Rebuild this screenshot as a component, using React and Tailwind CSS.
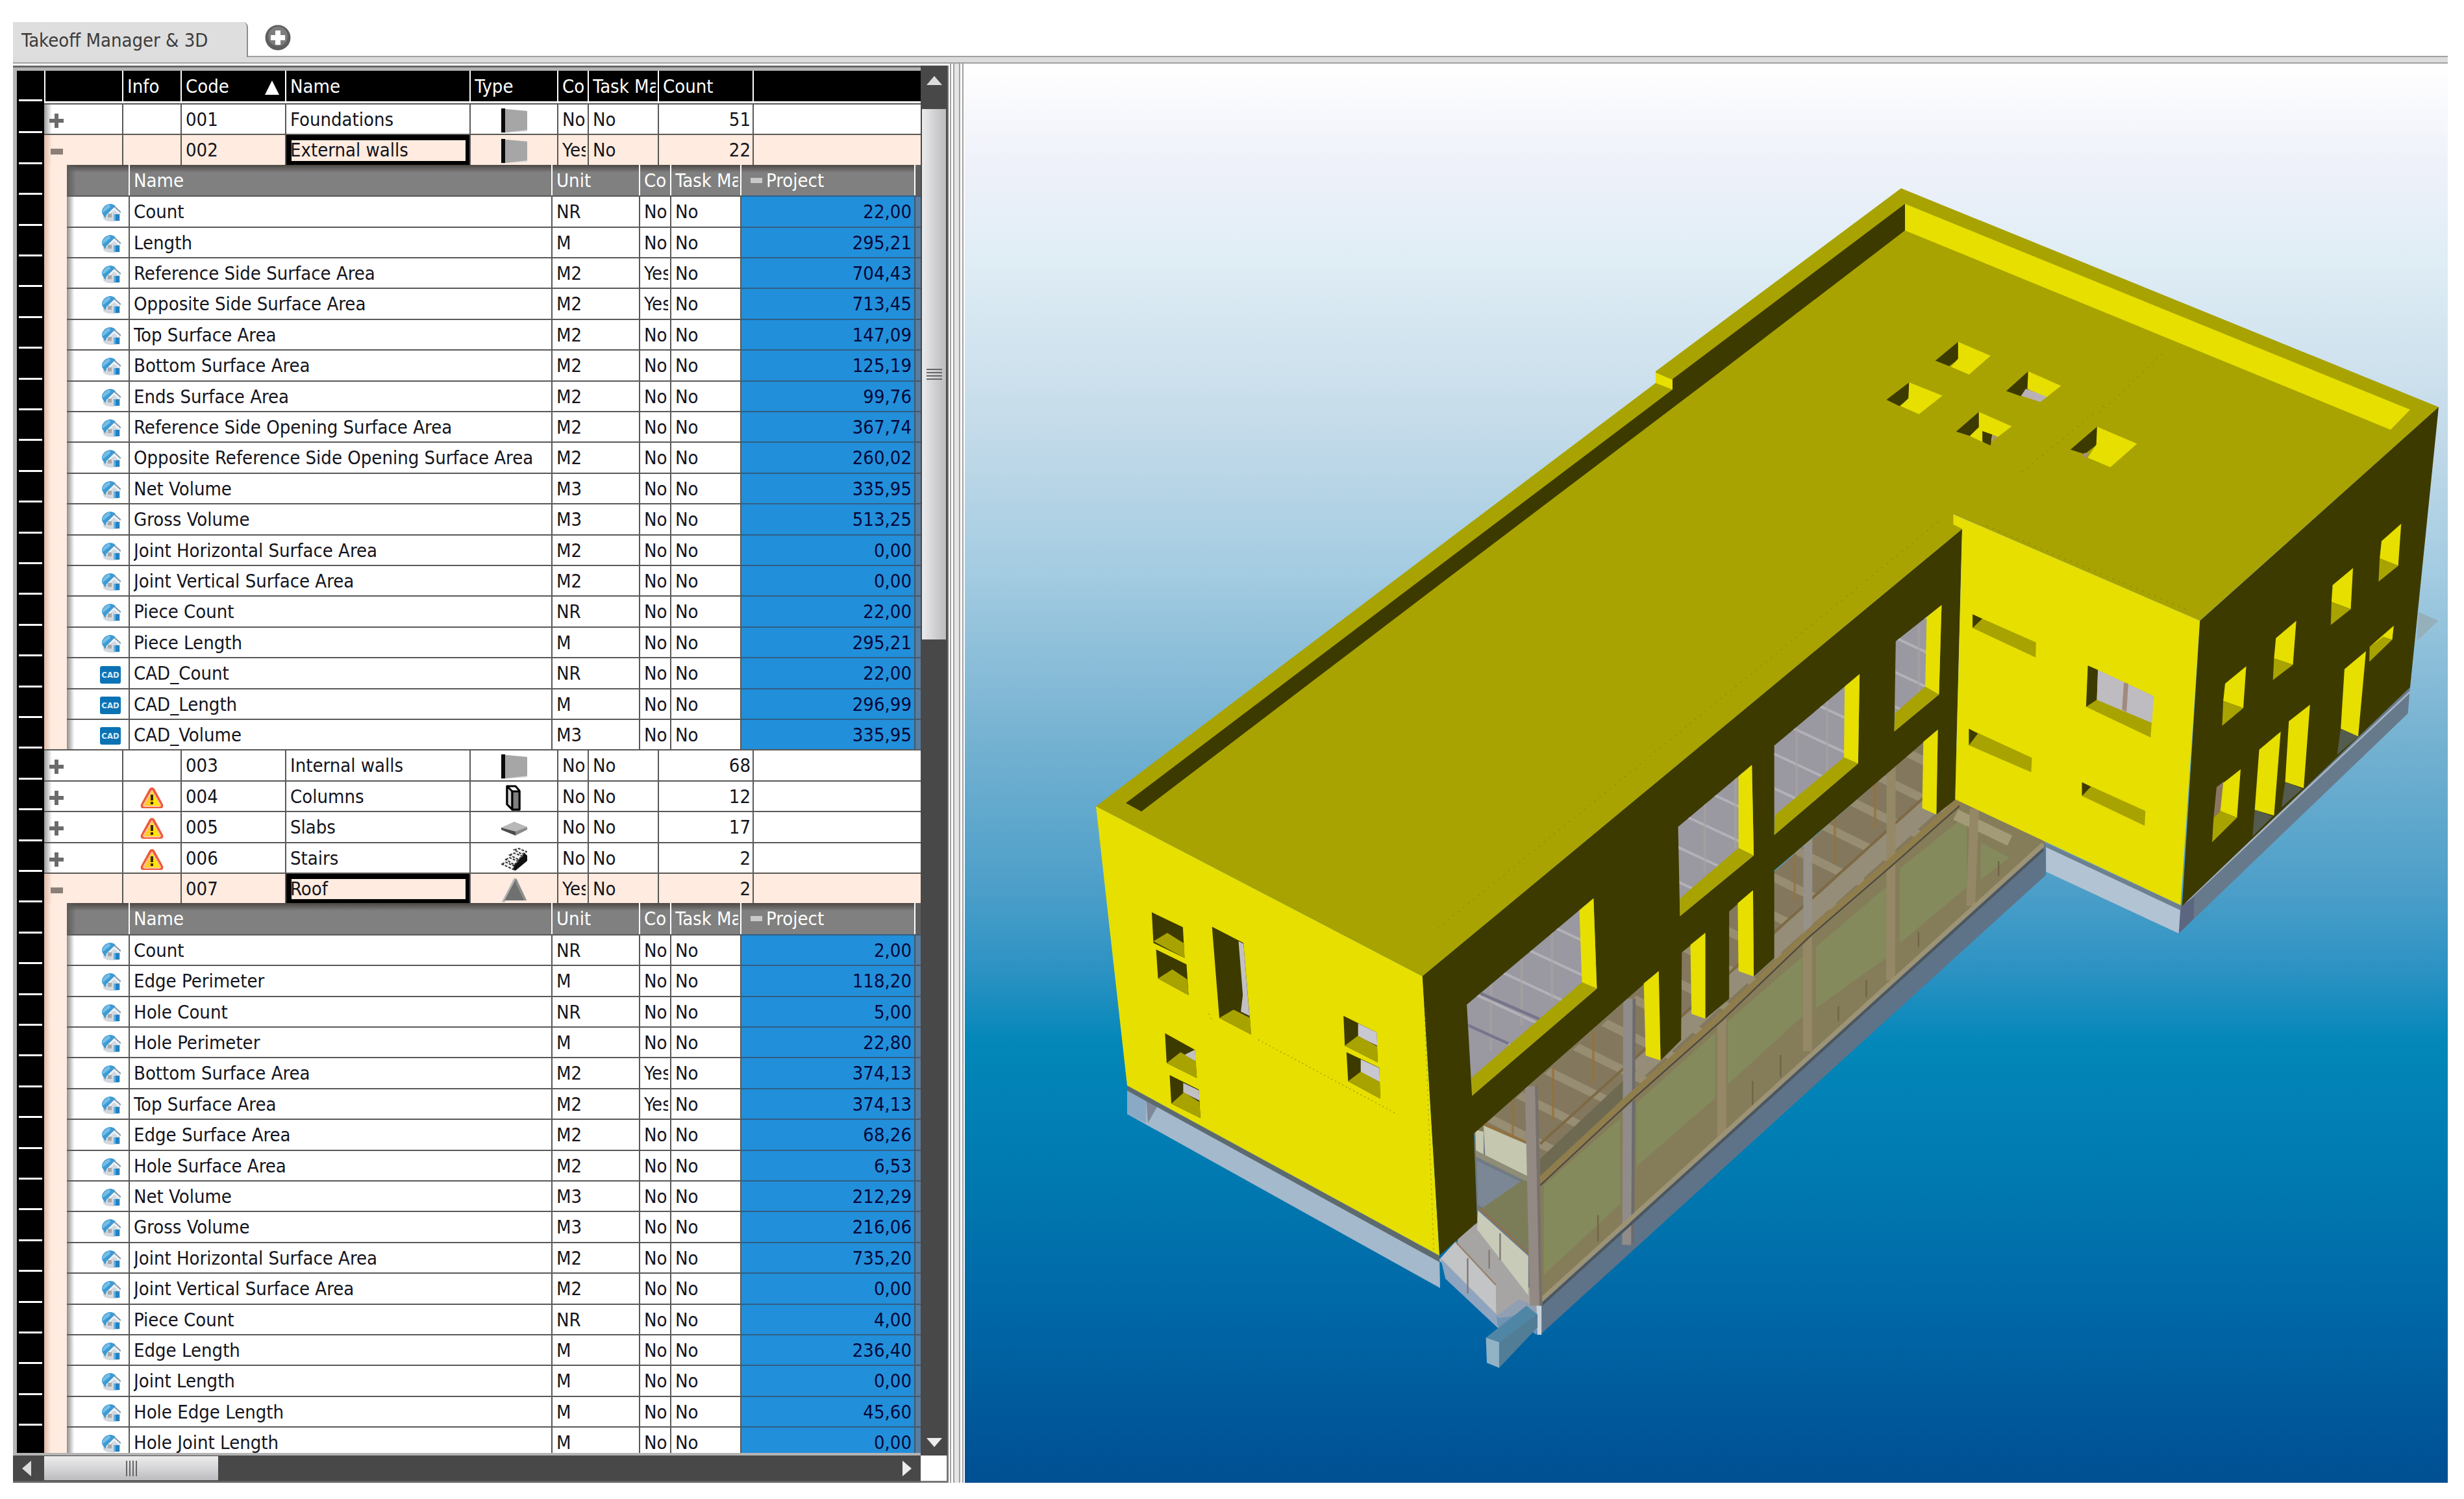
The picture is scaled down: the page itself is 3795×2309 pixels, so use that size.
import React from "react";
import clsx from "clsx";

const groups = [
  { code: "001", name: "Foundations", type: "wall", co: "No", count: 51 },
  {
    code: "002",
    name: "External walls",
    type: "wall",
    co: "Yes",
    count: 22,
    open: true,
    items: [
      ["Count", "NR", "No", "22,00"],
      ["Length", "M", "No", "295,21"],
      ["Reference Side Surface Area", "M2", "Yes", "704,43"],
      ["Opposite Side Surface Area", "M2", "Yes", "713,45"],
      ["Top Surface Area", "M2", "No", "147,09"],
      ["Bottom Surface Area", "M2", "No", "125,19"],
      ["Ends Surface Area", "M2", "No", "99,76"],
      ["Reference Side Opening Surface Area", "M2", "No", "367,74"],
      ["Opposite Reference Side Opening Surface Area", "M2", "No", "260,02"],
      ["Net Volume", "M3", "No", "335,95"],
      ["Gross Volume", "M3", "No", "513,25"],
      ["Joint Horizontal Surface Area", "M2", "No", "0,00"],
      ["Joint Vertical Surface Area", "M2", "No", "0,00"],
      ["Piece Count", "NR", "No", "22,00"],
      ["Piece Length", "M", "No", "295,21"],
      ["CAD_Count", "NR", "No", "22,00"],
      ["CAD_Length", "M", "No", "296,99"],
      ["CAD_Volume", "M3", "No", "335,95"],
    ],
  },
  { code: "003", name: "Internal walls", type: "wall", co: "No", count: 68 },
  { code: "004", name: "Columns", type: "column", co: "No", count: 12, warn: true },
  { code: "005", name: "Slabs", type: "slab", co: "No", count: 17, warn: true },
  { code: "006", name: "Stairs", type: "stairs", co: "No", count: 2, warn: true },
  {
    code: "007",
    name: "Roof",
    type: "roof",
    co: "Yes",
    count: 2,
    open: true,
    items: [
      ["Count", "NR", "No", "2,00"],
      ["Edge Perimeter", "M", "No", "118,20"],
      ["Hole Count", "NR", "No", "5,00"],
      ["Hole Perimeter", "M", "No", "22,80"],
      ["Bottom Surface Area", "M2", "Yes", "374,13"],
      ["Top Surface Area", "M2", "Yes", "374,13"],
      ["Edge Surface Area", "M2", "No", "68,26"],
      ["Hole Surface Area", "M2", "No", "6,53"],
      ["Net Volume", "M3", "No", "212,29"],
      ["Gross Volume", "M3", "No", "216,06"],
      ["Joint Horizontal Surface Area", "M2", "No", "735,20"],
      ["Joint Vertical Surface Area", "M2", "No", "0,00"],
      ["Piece Count", "NR", "No", "4,00"],
      ["Edge Length", "M", "No", "236,40"],
      ["Joint Length", "M", "No", "0,00"],
      ["Hole Edge Length", "M", "No", "45,60"],
      ["Hole Joint Length", "M", "No", "0,00"],
    ],
  },
];

// every line of the grid gets a running number, open groups take 1 + header + items
let line = 0;
const rows = groups.map((group) => {
  const start = line;
  line += group.open ? group.items.length + 2 : 1;
  return { ...group, start };
});
const totalLines = line;

const rowHeight = (i) => (i % 5 === 1 || i % 5 === 3 ? "h-12" : "h-[47px]");

const TypeIcon = ({ type }) => (
  <svg viewBox="0 0 40 40" className="mx-auto h-10 w-10">
    {type === "wall" && (
      <>
        <path d="M0 1 40 5V36L0 39Z" fill="#d4d4d4" />
        <path d="M5 2 40 5V34L5 38Z" fill="#a6a6a6" />
        <path d="M0 1H6V38H0Z" fill="#0a0a0a" />
      </>
    )}
    {type === "column" && (
      <g stroke="#000" strokeWidth="3" strokeLinejoin="round">
        <path d="M9 2H22L28 9V38H17L9 30Z" fill="#fff" />
        <path d="M9 2 17 10V38L9 30Z" fill="#d0d0d0" />
        <path d="M17 10H28V38H17Z" fill="#808080" />
      </g>
    )}
    {type === "slab" && (
      <>
        <path d="M0 19 20 10 40 18V22L22 31 0 22Z" fill="#8a8a8a" />
        <path d="M0 19 20 10 40 18 22 25Z" fill="#b8b8b8" />
        <path d="M0 19 22 25V31L0 22Z" fill="#4c4c4c" />
      </>
    )}
    {type === "stairs" && (
      <>
        <path d="M36 10 40 14V22L22 37 18 36V30Z" fill="#111" />
        <g fill="#f2f2f2" stroke="#333" strokeWidth="2" strokeDasharray="4 2">
          <path d="M20 5 27 3 39 8 32 12Z" />
          <path d="M13 13 20 10 33 15 26 20Z" />
          <path d="M7 20 13 17 26 23 20 28Z" />
          <path d="M1 27 7 24 20 30 18 35Z" />
        </g>
      </>
    )}
    {type === "roof" && (
      <>
        <path d="M20 1 1 38 5 39 23 4Z" fill="#b4b4b4" />
        <path d="M23 2 39 36H5Z" fill="#707070" />
        <path d="M23 2 39 36 35 36 22 8Z" fill="#8f8f8f" />
      </>
    )}
  </svg>
);

const WarningIcon = () => (
  <svg viewBox="0 0 36 34" className="mx-auto h-[34px] w-9">
    <path
      d="M18 1C21 1 22 3 23 5L35 27C36 31 35 33 31 33H5C1 33 0 31 1 27L13 5C14 3 15 1 18 1Z"
      fill="#f0593c"
    />
    <path d="M18 4 32 28C32 30 31 31 29 31H7C5 31 4 30 4 28Z" fill="#fbc9a0" />
    <path d="M18 7 30 29H6Z" fill="#ffcc1f" />
    <path d="M18 7 30 29H18Z" fill="#ffe600" />
    <path d="M16 12H20V21H16ZM16 23H20V27H16Z" fill="#3b2a00" />
  </svg>
);

const HouseIcon = () => (
  <svg viewBox="0 0 30 28" className="h-7 w-[30px]">
    <path d="M3 12V23C8 28 16 28 29 26V12L20 4Z" fill="#d3d8de" />
    <path d="M1 14C0 8 5 1 13 0 17 0 20 1 22 4L8 17 6 22Z" fill="#3d9ad3" />
    <path d="M1 14C2 7 7 2 13 1L14 5 4 13Z" fill="#74bde6" />
    <path d="M8 17 20 5 29 13 27 16 20 9 10 18Z" fill="#eef4f9" />
    <path d="M20 4 30 13" stroke="#7f95a8" strokeWidth="2" />
    <path d="M10 15H16V21H10Z" fill="#a8a8a8" />
    <path d="M19 16H28V26H19Z" fill="#2381c3" />
    <path d="M19 16H22V26H19Z" fill="#62b2e2" />
  </svg>
);

const CadIcon = () => (
  <span className="flex h-[27px] w-8 items-center justify-center rounded-[3px] bg-[#0b72b5] text-[13px] font-bold leading-none text-[#d5ecfa]">
    CAD
  </span>
);

const Toggle = ({ open }) => (
  <button
    aria-label={open ? "Collapse" : "Expand"}
    className="ml-2 mt-1 block h-[22px] w-[22px]"
  >
    <svg viewBox="0 0 22 22" className="h-full w-full" fill="#6b6b6b">
      {open ? (
        <path d="M2 7H21V16H2Z" fill="#8b7f78" />
      ) : (
        <path d="M8 0H14V8H22V14H14V22H8V14H0V8H8Z" />
      )}
    </svg>
  </button>
);

const Cell = ({ children, className }) => (
  <td
    className={clsx(
      "border-l-2 border-t-2 border-[#5a5857] py-0 pl-[6px] pr-[3px]",
      className
    )}
  >
    <span className="block overflow-hidden whitespace-nowrap">{children}</span>
  </td>
);

const HeadCell = ({ children }) => (
  <th className="border-l-2 border-white py-0 pl-[6px] pr-[3px] text-left font-normal">
    <span className="block overflow-hidden whitespace-nowrap">{children}</span>
  </th>
);

const Details = ({ items, start }) => (
  <div className="flex">
    <div className="w-[35px] shrink-0 bg-linear-to-r from-[#dcb9a5] via-[#ffebdf] via-30% to-[#ffebdf]" />
    <table className="w-full table-fixed border-separate border-spacing-0">
      <colgroup>
        <col className="w-[95px]" />
        <col className="w-[651px]" />
        <col className="w-[135px]" />
        <col className="w-12" />
        <col className="w-[108px]" />
        <col className="w-[268px]" />
        <col />
      </colgroup>
      <thead>
        <tr
          className={clsx(
            "bg-linear-to-b from-[#4c4744] via-[#808080] via-25% to-[#808080] text-white",
            rowHeight(start)
          )}
        >
          <th className="bg-linear-to-r from-[#5c5c5c] to-transparent to-15%" />
          <HeadCell>Name</HeadCell>
          <HeadCell>Unit</HeadCell>
          <HeadCell>Co</HeadCell>
          <HeadCell>Task Ma</HeadCell>
          <HeadCell>
            <span className="flex items-center gap-[6px] pl-2">
              <span className="h-2 w-[18px] bg-[#c9c9c9]" />
              Project
            </span>
          </HeadCell>
          <th className="border-l-2 border-white bg-[#5f5f5f]" />
        </tr>
      </thead>
      <tbody>
        {items.map(([name, unit, co, value], i) => (
          <tr key={name} className={clsx("bg-white", rowHeight(start + 1 + i))}>
            <td className="border-t-2 border-[#5a5857] bg-linear-to-r from-[#8e8e8e] to-white to-12% py-0 pr-3">
              <span className="mt-1 flex justify-end">
                {name.startsWith("CAD") ? <CadIcon /> : <HouseIcon />}
              </span>
            </td>
            <Cell>{name}</Cell>
            <Cell>{unit}</Cell>
            <Cell>{co}</Cell>
            <Cell>No</Cell>
            <td className="border-l-2 border-t-2 border-l-[#5a5857] border-t-[#2f5f85] bg-[#228fda] py-0 pr-1 text-right text-[#04083a]">
              {value}
            </td>
            <td className="border-l-2 border-t-2 border-[#44586b] bg-[#5a7c9e]" />
          </tr>
        ))}
      </tbody>
    </table>
  </div>
);

const TakeoffTable = () => (
  <table className="w-full table-fixed border-separate border-spacing-0">
    <colgroup>
      <col className="w-[120px]" />
      <col className="w-[90px]" />
      <col className="w-[161px]" />
      <col className="w-[284px]" />
      <col className="w-[135px]" />
      <col className="w-[47px]" />
      <col className="w-[108px]" />
      <col className="w-[146px]" />
      <col />
    </colgroup>
    <thead>
      <tr className="h-[47px] bg-black text-white">
        <th className="border-l-2 border-white" />
        <HeadCell>Info</HeadCell>
        <HeadCell>
          <span className="flex items-center justify-between pr-[6px]">
            Code
            <svg viewBox="0 0 22 22" className="mt-1 h-[22px] w-[22px]">
              <path d="M11 0 22 22H0Z" fill="#fff" />
            </svg>
          </span>
        </HeadCell>
        <HeadCell>Name</HeadCell>
        <HeadCell>Type</HeadCell>
        <HeadCell>Co</HeadCell>
        <HeadCell>Task Ma</HeadCell>
        <HeadCell>Count</HeadCell>
        <th className="border-l-2 border-white" />
      </tr>
      <tr className="h-[3px]">
        <th colSpan={9} className="bg-white p-0" />
      </tr>
    </thead>
    <tbody>
      {rows.map((row) => (
        <React.Fragment key={row.code}>
          <tr
            className={clsx(
              rowHeight(row.start),
              row.open ? "bg-[#ffebdf]" : "bg-white"
            )}
          >
            <td
              className={clsx(
                "border-t-2 border-[#5a5857] bg-linear-to-r to-transparent to-10% p-0",
                row.open ? "from-[#dcb9a5]" : "from-[#9a9a9a]"
              )}
            >
              <Toggle open={row.open} />
            </td>
            <td className="border-l-2 border-t-2 border-[#5a5857] p-0 pt-1">
              {row.warn && <WarningIcon />}
            </td>
            <Cell>{row.code}</Cell>
            <Cell
              className={
                row.open &&
                "shadow-[inset_8px_8px_0_#000,inset_-6px_-6px_0_#000]"
              }
            >
              {row.name}
            </Cell>
            <td className="border-l-2 border-t-2 border-[#5a5857] p-0 pt-1">
              <TypeIcon type={row.type} />
            </td>
            <Cell>{row.co}</Cell>
            <Cell>No</Cell>
            <Cell className="text-right">{row.count}</Cell>
            <td className="border-l-2 border-t-2 border-[#5a5857]" />
          </tr>
          {row.open && (
            <tr>
              <td colSpan={9} className="p-0">
                <Details items={row.items} start={row.start + 1} />
              </td>
            </tr>
          )}
        </React.Fragment>
      ))}
    </tbody>
  </table>
);

const RowGutter = () => (
  <div className="w-[42px] shrink-0 bg-black px-[3px]">
    <div className="mb-[2px] h-[47px] border-b-[3px] border-white" />
    {Array.from({ length: totalLines }, (_, i) => (
      <div
        key={i}
        className={clsx("border-b-[3px] border-white", rowHeight(i))}
      />
    ))}
  </div>
);

const VerticalScrollbar = () => (
  <div className="flex w-[43px] shrink-0 flex-col border-r-2 border-[#6f6f6f] bg-[#484848] pt-[2px]">
    <button aria-label="Scroll up" className="h-[65px] w-full">
      <svg viewBox="0 0 24 14" className="mx-auto mb-6 h-[14px] w-6">
        <path d="M12 0 24 14H0Z" fill="#dcdcdc" />
      </svg>
    </button>
    <div className="mx-[2px] flex h-[817px] flex-col items-center justify-center gap-[3px] bg-linear-to-r from-[#ececec] via-[#d2d2d4] to-[#bcbcc0]">
      {[0, 1, 2, 3].map((i) => (
        <span key={i} className="h-[2px] w-6 bg-[#666]" />
      ))}
    </div>
    <button aria-label="Scroll down" className="mt-auto h-10 w-full">
      <svg viewBox="0 0 24 14" className="mx-auto h-[14px] w-6">
        <path d="M12 14 24 0H0Z" fill="#ececec" />
      </svg>
    </button>
  </div>
);

const HorizontalScrollbar = () => (
  <div className="flex h-[42px] shrink-0">
    <div className="flex flex-1 items-center border-b-[3px] border-[#666] bg-[#484848]">
      <button aria-label="Scroll left" className="w-12">
        <svg viewBox="0 0 14 24" className="ml-[14px] h-6 w-[14px]">
          <path d="M0 12 14 0V24Z" fill="#dcdcdc" />
        </svg>
      </button>
      <div className="flex h-[37px] w-[268px] items-center justify-center gap-[3px] bg-linear-to-b from-[#ececec] via-[#d6d6d8] to-[#bcbcc0]">
        {[0, 1, 2, 3].map((i) => (
          <span key={i} className="h-6 w-[2px] bg-[#666]" />
        ))}
      </div>
      <button aria-label="Scroll right" className="ml-auto w-7">
        <svg viewBox="0 0 14 24" className="h-6 w-[14px]">
          <path d="M14 12 0 0V24Z" fill="#ececec" />
        </svg>
      </button>
    </div>
    <div className="w-[43px] border-b-[3px] border-r-[3px] border-[#777] bg-white" />
  </div>
);

const TOP = "#a8a300";
const LIT = "#e6df00";
const DARK = "#3d3a00";

const P = ({ p, f, o }) => <polygon points={p} fill={f} opacity={o} />;

const Model = () => (
  <svg
    viewBox="1486 98 2284 2186"
    preserveAspectRatio="none"
    className="h-full w-full"
    role="img"
    aria-label="3D model"
  >
    <defs>
      <linearGradient id="sky" x1="0" y1="0" x2="0" y2="1">
        <stop offset="0" stopColor="#ffffff" />
        <stop offset="0.07" stopColor="#eff1fa" />
        <stop offset="0.14" stopColor="#dfedf5" />
        <stop offset="0.25" stopColor="#c6dcea" />
        <stop offset="0.36" stopColor="#a3cbe1" />
        <stop offset="0.48" stopColor="#74b1d1" />
        <stop offset="0.58" stopColor="#4d9fc9" />
        <stop offset="0.64" stopColor="#2b92c3" />
        <stop offset="0.69" stopColor="#0387b9" />
        <stop offset="0.78" stopColor="#007ab1" />
        <stop offset="0.88" stopColor="#0067a6" />
        <stop offset="1" stopColor="#004f93" />
      </linearGradient>
      <clipPath id="floor">
        <polygon points="2270,1746 2513,1540 2960,1100 3011,1232 2513,1688 2372,1820 2290,1790" />
      </clipPath>
      <clipPath id="glass">
        <polygon points="103,1215 443,930 412,1155 117,1410" />
        <polygon points="670,738 868,572 832,795 675,930" />
        <polygon points="928,520 1157,328 1115,552 930,706" />
        <polygon points="1254,240 1377,143 1333,362 1252,433" />
      </clipPath>
    </defs>
    <rect x="1486" y="98" width="2284" height="2186" fill="url(#sky)" />

    {/* glazed terrace under the long facade */}
    <P p="2372,2005 3151,1299 3151,1348 2372,2056" f="#5f7388" />
    <P p="2270,1700 3011,1150 3151,1299 2372,2008 2275,1883" f="#857c5a" />
    <P p="2270,1746 3011,1100 3015,1235 2372,1820 2280,1790" f="#83785f" />
    <g clipPath="url(#floor)">
      {Array.from({ length: 20 }, (_, i) => (
        <path
          key={i}
          d={`M${2210 + i * 42} ${1740 - i * 38}l170 84`}
          stroke="#a2977e"
          strokeWidth="13"
          opacity="0.7"
        />
      ))}
      {Array.from({ length: 10 }, (_, i) => (
        <path
          key={i}
          d={`M${2330 + i * 62} ${1600 - i * 56}v180`}
          stroke="#96713a"
          strokeWidth="4"
          opacity="0.7"
        />
      ))}
      <path d="M2372 1785 2510 1655V1690L2372 1825Z" fill="#6e6a52" />
      <path d="M2520 1650 2980 1235" stroke="#958d78" strokeWidth="28" />
      <path d="M2372 1762 2980 1213" stroke="#7d6a45" strokeWidth="4" />
    </g>
    <g transform="translate(2200 850) scale(.574)" fill="#848a5c">
      <path d="M310 1700 515 1520V1750L310 1940Z" />
      <path d="M558 1480 770 1290V1465L558 1650Z" />
      <path d="M803 1260 1005 1085V1245L803 1430Z" />
      <path d="M1040 1060 1228 900V1090L1040 1225Z" />
      <path d="M1265 850 1445 705V900L1265 1050Z" />
      <path d="M1482 780 1560 820 1482 880Z" />
      <path d="M1415 705 1560 775" stroke="#a39b78" strokeWidth="30" />
      <g stroke="#6f6446" strokeWidth="4">
        <path d="M455 1780V1850M870 1420V1500M945 1350V1410M1100 1220V1260M1175 1150V1195M1315 1020V1060M1530 830V870" />
      </g>
      <g stroke="#958867" strokeWidth="24">
        <path d="M787 1240V1570M1017 1020V1340M1242 560 1240 1150M1465 690 1455 950" />
      </g>
      <path d="M1018 770V1030M538 1200V1470" stroke="#969189" strokeWidth="24" />
      <path d="M275 1440V2080" stroke="#8d847a" strokeWidth="26" />
      <path d="M538 1200 535 1860" stroke="#8f8c8a" strokeWidth="30" />
      <path d="M552 1200 548 1860" stroke="#6d6b6e" strokeWidth="8" />
      <path d="M300 1690 545 1462 790 1245 1020 1025 1255 822 1425 672" fill="none" stroke="#8f7e4c" strokeWidth="22" />
      <path d="M300 1700 545 1472 790 1255 1020 1035 1255 832 1425 682" fill="none" stroke="#4c4a47" strokeWidth="4" />
      <path d="M300 2010 1650 785" stroke="#9d9375" strokeWidth="12" />
      <path d="M300 2024 1650 799" stroke="#4b565f" strokeWidth="7" />
    </g>

    {/* entrance stairs */}
    <g transform="translate(1650 1150) scale(.51 .638)">
      <P p="1220,930 1395,970 1400,1340 1230,1230 1180,1180" f="#6f7b84" />
      <P p="1245,915 1390,965 1390,1042 1250,990" f="#c5c8ae" />
      <P p="1220,925 1245,930 1245,990 1222,975" f="#c5c8ae" />
      <P p="1222,975 1390,1042 1385,1055 1222,990" f="#8f8c78" />
      <P p="1225,1000 1360,1052 1245,1115 1228,1105" f="#7c8795" />
      <P p="1240,1115 1360,1048 1395,1050 1395,1225" f="#7b7d58" />
      <P p="1170,1170 1230,1150 1400,1325 1415,1365 1290,1380 1160,1250" f="#a7a5a3" />
      <P p="1228,1120 1380,1230 1380,1325 1225,1165" f="#c8cbb8" />
      <path
        d="M1235 1115 1385 1225M1245 912 1390 960"
        stroke="#96713a"
        strokeWidth="5"
      />
      <P p="1110,1240 1160,1195 1282,1300 1283,1372" f="#c2c4c6" />
      <path d="M1160 1195 1282 1300" stroke="#96806a" strokeWidth="4" />
      <P p="1115,1235 1283,1370 1290,1405 1130,1285" f="#8fa5bf" />
      <path
        d="M1197 1235V1320M1295 1175V1240M1262 1215V1260"
        stroke="#857c77"
        strokeWidth="5"
      />
      <P p="1283,1375 1350,1335 1412,1352 1405,1420 1340,1385 1290,1410" f="#8b9fb5" o="0.8" />
      <path d="M1385 820 1400 1350" stroke="#948a84" strokeWidth="30" />
      <path d="M1405 820 1418 1350" stroke="#77706c" strokeWidth="9" />
      <P p="1405,1350 1420,1350 1420,1420 1407,1420" f="#c9d2da" />
      <P p="1252,1427 1375,1350 1408,1372 1292,1440" f="#4f86a5" />
      <P p="1292,1438 1408,1370 1408,1402 1292,1500" f="#527d97" />
      <P p="1252,1427 1292,1438 1292,1500 1255,1488" f="#92b2c6" />
    </g>

    {/* roof */}
    <P
      p="1688,1242 2240,824 2550,590 2550,572 2928,290 3756,627 3388,956 3008,792 3022,815 2191,1504"
      f={TOP}
    />
    <P
      p="1734,1237 2240,854 2576,600 2576,584 2934,314 2934,355 2640,580 2240,883 1758,1250"
      f={DARK}
    />
    <P p="2550,574 2576,585 2576,600 2550,590" f={LIT} />
    <P p="2934,314 3712,631 3682,662 2934,355" f={LIT} />
    <g transform="translate(2850 250) scale(.603 .446)">
      <P p="275,620 217,685 252,704 278,678" f={DARK} />
      <P p="275,620 358,668 303,733 257,706 275,678" f={LIT} />
      <P p="150,760 92,820 125,842 150,815" f={DARK} />
      <P p="150,760 235,806 175,870 128,842 148,815" f={LIT} />
      <P p="454,722 398,790 435,808 456,780" f={DARK} />
      <P p="454,722 538,772 500,812 452,782" f={LIT} />
      <P p="448,782 502,810 485,828 436,806" f="#b9b1b5" />
      <P p="328,862 270,930 305,945 330,915" f={DARK} />
      <P p="328,862 412,912 365,960 340,968 305,945 328,915" f={LIT} />
      <P p="337,928 362,940 358,978 337,965" f={DARK} />
      <P p="362,940 376,948 362,965" f="#a89078" />
      <P p="630,913 562,992 598,1008 630,975" f={DARK} />
      <P p="630,913 732,972 664,1053 606,1020 628,975" f={LIT} />
      <P p="598,1003 610,1008 603,1022 592,1012" f="#a89078" />
    </g>
    <path
      d="M2215 1430 2990 800M3330 545 3230 640M3240 625 3110 730M3060 810 3370 940"
      stroke="#7b7700"
      strokeWidth="1"
      strokeDasharray="2 8"
    />

    {/* west facade */}
    <P p="1736,1672 2217,1934 2218,1984 1736,1716" f="#a4b9cc" />
    <P p="1736,1672 1765,1688 1765,1730 1736,1716" f="#8aa9c5" />
    <P p="1765,1688 1785,1700 1768,1730" f="#7f8899" />
    <P p="1736,1672 2217,1934 2217,1944 1736,1680" f="#5d6a70" />
    <P p="1688,1242 2191,1504 2217,1934 1736,1672" f={LIT} />
    <g transform="translate(1650 1150) scale(.51 .638)">
      <P p="243,400 337,436 342,510 248,474" f={DARK} />
      <P p="248,470 290,450 340,475 342,510" f={TOP} />
      <P p="256,490 348,526 354,600 262,560" f={DARK} />
      <P p="262,560 305,538 350,562 354,600" f={TOP} />
      <P p="425,435 520,474 543,695 447,655" f={DARK} />
      <P p="505,470 520,476 538,650 512,640 518,600" f="#c3c0c4" />
      <P p="447,655 490,635 540,655 543,695" f={TOP} />
      <P p="283,692 373,732 379,800 288,764" f={DARK} />
      <P p="340,745 373,732 376,760" f="#c3c0c4" />
      <P p="288,764 330,738 376,760 379,800" f={TOP} />
      <P p="297,793 385,828 390,897 302,862" f={DARK} />
      <P p="338,812 385,830 388,855 338,835" f="#c3c0c4" />
      <P p="302,862 340,835 387,858 390,897" f={TOP} />
      <P p="822,650 922,690 925,762 826,722" f={DARK} />
      <P p="866,668 922,690 924,722 866,700" f="#c9c7cf" />
      <P p="826,722 866,698 924,724 925,762" f={TOP} />
      <P p="831,738 930,775 933,850 836,808" f={DARK} />
      <P p="874,755 930,776 932,810 874,786" f="#c9c7cf" />
      <P p="836,808 874,785 932,810 933,850" f={TOP} />
      <path
        d="M565 708 985 888M415 645 425 660M1065 600 1095 1225"
        stroke="#8a8600"
        strokeWidth="2"
        strokeDasharray="3 9"
      />
    </g>

    {/* long facade with the big windows */}
    <g transform="translate(2200 850) scale(.574)">
      <P
        p="-16,1139 1432,-61 1413,665 1363,705 1367,478 928,855 928,1090 873,1140 871,910 807,965 807,1200 743,1253 743,1025 680,1075 678,1310 623,1365 618,1125 122,1561 131,1799 30,1888"
        f={DARK}
      />
      <P p="578,1158 618,1125 623,1365 583,1352" f={LIT} />
      <P p="703,1055 743,1022 743,1253 706,1240" f={LIT} />
      <P p="830,943 871,908 873,1140 832,1125" f={LIT} />
      <P p="1328,510 1367,477 1363,705 1325,688" f={LIT} />
      <P p="103,1215 443,930 452,1172 117,1460" f="#9a98a0" />
      <P p="670,738 868,572 873,815 675,978" f="#9a98a0" />
      <P p="928,520 1157,328 1153,568 928,760" f="#9a98a0" />
      <P p="1254,240 1377,143 1370,383 1250,482" f="#9a98a0" />
      <g clipPath="url(#glass)">
        {Array.from({ length: 19 }, (_, i) => (
          <path
            key={i}
            d={`M${40 + i * 70} ${1240 - i * 60}l240 112`}
            stroke="#b3b1b8"
            strokeWidth="7"
          />
        ))}
        {Array.from({ length: 16 }, (_, i) => (
          <path
            key={i}
            d={`M${168 + i * 82} ${1150 - i * 68}v190`}
            stroke="#aaa3a2"
            strokeWidth="7"
            opacity="0.6"
          />
        ))}
        <path d="M105 1270 215 1320M140 1185 300 1255" stroke="#77758a" strokeWidth="8" />
      </g>
      <P p="405,962 443,930 452,1172 412,1155" f={LIT} />
      <P p="412,1155 452,1172 117,1460 117,1410" f={TOP} />
      <P p="832,603 868,572 873,815 832,795" f={LIT} />
      <P p="832,795 873,815 675,978 675,930" f={TOP} />
      <P p="1117,362 1157,328 1153,568 1115,552" f={LIT} />
      <P p="1115,552 1153,568 928,760 930,706" f={TOP} />
      <P p="1337,175 1377,143 1370,383 1333,362" f={LIT} />
      <P p="1333,362 1370,383 1250,482 1252,433" f={TOP} />
    </g>

    {/* projecting wing */}
    <g transform="translate(2900 780) scale(.571 .446)">
      <P p="1445,365 1498,395 1440,465" f="#95afbb" />
      <P p="803,1377 1422,625 1416,715 798,1475" f="#677a8c" />
      <path d="M805 1382 1422 640" stroke="#a9b6c4" strokeWidth="5" />
      <P p="803,1380 840,1350 838,1425 798,1475" f="#5c6680" />
      <P p="440,1162 803,1377 798,1475 440,1262" f="#b2c3d3" />
      <P p="440,1162 803,1377 803,1395 440,1177" f="#6c8090" />
      <P p="190,28 855,395 803,1377 195,1012 214,78 190,62" f={LIT} />
      <P p="855,395 1499,-343 1422,625 807,1380" f={DARK} />

      <P p="242,373 413,470 412,522 242,420" f={TOP} />
      <P p="242,373 268,388 242,420" f={DARK} />
      <P p="232,768 402,868 400,918 232,825" f={TOP} />
      <P p="232,768 256,785 232,825" f={DARK} />
      <P p="537,953 708,1052 706,1103 537,1000" f={TOP} />
      <P p="537,953 561,968 537,1000" f={DARK} />
      <P p="553,550 730,655 722,798 548,692" f={TOP} />
      <P p="553,550 580,565 577,668 548,692" f={DARK} />
      <P p="580,565 730,655 726,748 577,668" f="#bebbc1" />
      <P p="650,608 662,612 657,710 645,702" f="#a08a80" />

      <P p="1345,120 1398,60 1390,205 1340,180" f={LIT} />
      <P p="1340,180 1390,205 1337,260" f={TOP} />
      <P p="1213,272 1268,213 1262,355 1210,330" f={LIT} />
      <P p="1210,330 1262,355 1208,410" f={TOP} />
      <P p="1060,455 1115,395 1106,547 1055,525" f={LIT} />
      <P p="1055,525 1106,547 1052,600" f={TOP} />
      <P p="923,612 980,552 972,697 918,672" f={LIT} />
      <P p="918,672 972,697 915,758" f={TOP} />
      <P p="1313,485 1378,412 1374,460 1350,455" f={LIT} />
      <P p="1313,485 1350,450 1374,460 1312,537" f={TOP} />
      <P p="1245,562 1303,500 1282,795 1235,768" f={LIT} />
      <P p="1235,768 1282,795 1225,858" f="#545c50" />
      <P p="1095,742 1152,685 1135,973 1085,952" f={LIT} />
      <P p="1085,952 1132,975 1075,1040" f="#545c50" />
      <P p="1015,840 1073,778 1055,1068 1003,1048" f={LIT} />
      <P p="1003,1048 1052,1070 997,1140" f="#545c50" />
      <P p="900,970 920,950 910,1052 892,1075" f="#8b7560" />
      <P p="918,955 965,908 955,1075 910,1052" f={LIT} />
      <P p="910,1052 955,1075 888,1160 892,1075" f={TOP} />
    </g>
  </svg>
);

const TabBar = () => (
  <nav className="flex h-[52px] items-start">
    <a
      href="#takeoff"
      className="relative flex h-[54px] w-[362px] items-center rounded-tr-lg border-r-2 border-[#8c8c8c] bg-[#dedede] pl-[13px] pt-[2px] text-[#3c3c3c]"
    >
      Takeoff Manager &amp; 3D
    </a>
    <button aria-label="Add tab" className="ml-[26px] mt-1">
      <svg viewBox="0 0 40 40" className="h-10 w-10">
        <circle cx="20" cy="20" r="19.5" fill="#5f5f5f" />
        <circle cx="20" cy="18" r="15" fill="#7d7d7d" />
        <path d="M16 9H24V16H31V24H24V31H16V24H9V16H16Z" fill="#fff" />
      </svg>
    </button>
  </nav>
);

const App = () => {
  return (
    <div className="flex h-screen flex-col overflow-hidden bg-white pb-[25px] pl-5 pr-[25px] pt-[34px] font-['DejaVu_Sans_Condensed','Noto_Sans',sans-serif] text-[29px] leading-9 text-[#14141c]">
      <TabBar />
      <div className="h-3 shrink-0 border-y-2 border-[#a0a0a0] bg-[#dcdcdc]" />

      <main className="flex min-h-0 flex-1">
        <section className="flex w-[1441px] shrink-0 flex-col pt-[3px]">
          <div className="flex min-h-0 flex-1">
            <div className="flex min-w-0 flex-1 border-t-[3px] border-[#666]">
              <div className="flex min-w-0 flex-1 overflow-hidden border-b-4 border-l-[6px] border-t-[5px] border-[#b4b4b4]">
                <RowGutter />
                <div className="min-w-0 flex-1">
                  <TakeoffTable />
                </div>
              </div>
            </div>
            <VerticalScrollbar />
          </div>
          <HorizontalScrollbar />
        </section>

        <div className="mx-[2px] flex w-[21px] shrink-0 border-x-2 border-[#a0a0a0] px-[3px]">
          <div className="flex-1 border-x-2 border-[#a0a0a0] bg-[#e5e5e5]" />
        </div>

        <section className="min-w-0 flex-1">
          <Model />
        </section>
      </main>
    </div>
  );
};

export default App;
